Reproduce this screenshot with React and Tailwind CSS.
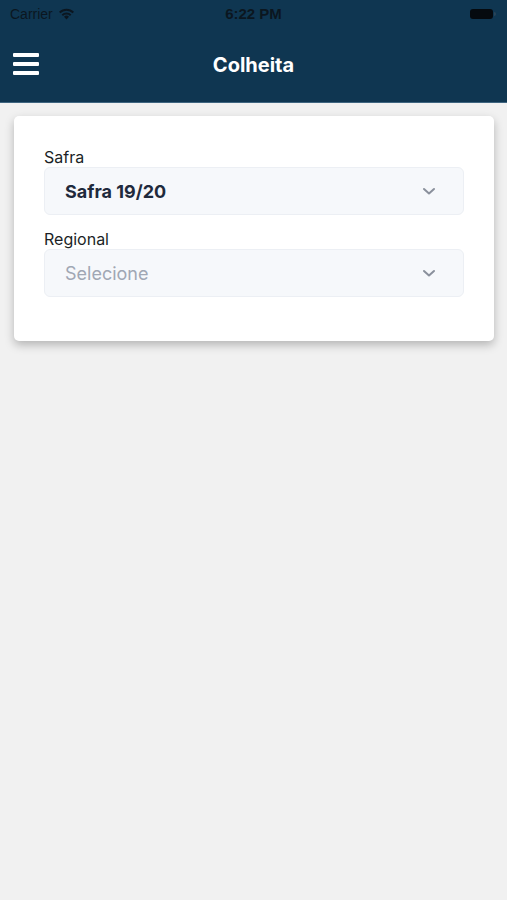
import React from "react";

function Chevron() {
  return (
    <svg width="14" height="9" viewBox="0 0 14 9" fill="none">
      <path d="M2 2l5 4.5L12 2" stroke="#8a909c" strokeWidth="2" strokeLinecap="round" strokeLinejoin="round" />
    </svg>
  );
}

function Select({ value, placeholder }) {
  return (
    <div className="flex h-[48px] items-center justify-between rounded-[6px] border border-[#eceff4] bg-[#f6f8fb] pl-[20px] pr-[27px]">
      {value ? (
        <span className="text-[18px] font-bold text-[#1f2a3c]">{value}</span>
      ) : (
        <span className="text-[18px] text-[#a0a7b4]">{placeholder}</span>
      )}
      <Chevron />
    </div>
  );
}

export default function App() {
  return (
    <div className="min-h-[900px] bg-[#f1f1f1]" style={{ fontFamily: "Inter, 'Liberation Sans', Arial, sans-serif" }}>
      <div className="bg-[#0f3651] border-b border-[#3f6580]">
        <div className="relative flex h-[28px] items-center justify-between px-[10px]" style={{ fontFamily: "'Liberation Sans', Arial, sans-serif" }}>
          <div className="flex items-center gap-[5px] text-[14px] text-[#0b1620]">
            <span>Carrier</span>
            <svg width="17" height="12" viewBox="0 0 17 12">
              <path d="M8.5 11.5L6 8.7a3.6 3.6 0 015 0z" fill="#0b1620" />
              <path d="M3.6 6.4a7 7 0 019.8 0l-1.4 1.5a5 5 0 00-7 0z" fill="#0b1620" />
              <path d="M1 3.8a10.6 10.6 0 0115 0l-1.4 1.5a8.6 8.6 0 00-12.2 0z" fill="#0b1620" />
            </svg>
          </div>
          <div className="absolute left-0 right-0 text-center text-[15px] font-bold text-[#0b1620]">6:22 PM</div>
          <div className="flex items-center pr-[1px]">
            <div className="h-[10px] w-[23px] rounded-[3px] bg-[#050a0f]" />
            <div className="ml-[1px] h-[4px] w-[2px] rounded-r-sm bg-[#2a4458]" />
          </div>
        </div>
        <div className="relative flex h-[74px] items-center justify-center">
          <div className="absolute left-[13px] top-[25px] flex flex-col gap-[5px]">
            <div className="h-[4px] w-[26px] rounded-[1px] bg-white" />
            <div className="h-[4px] w-[26px] rounded-[1px] bg-white" />
            <div className="h-[4px] w-[26px] rounded-[1px] bg-white" />
          </div>
          <span className="text-[20px] font-bold text-white">Colheita</span>
        </div>
      </div>
      <div className="pl-[14px] pr-[13px] pt-[13px]">
        <div className="rounded-[5px] bg-white px-[30px] pt-[31px] pb-[44px] shadow-[0_4px_10px_rgba(0,0,0,0.25)]">
          <div className="text-[16px] leading-[20px] text-[#1b1f26]">Safra</div>
          <Select value="Safra 19/20" />
          <div className="mt-[14px] text-[16px] leading-[20px] text-[#1b1f26]">Regional</div>
          <Select placeholder="Selecione" />
        </div>
      </div>
    </div>
  );
}
